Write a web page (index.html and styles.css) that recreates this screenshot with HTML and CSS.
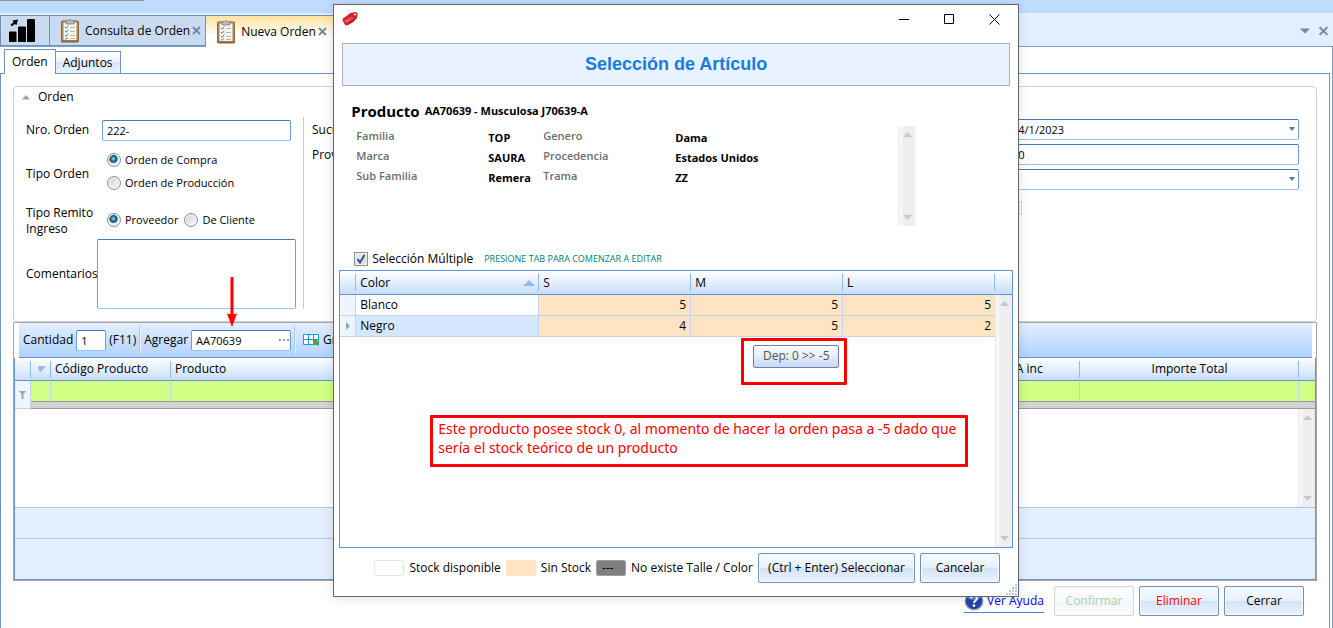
FILE: index.html
```html
<!DOCTYPE html>
<html lang="es">
<head>
<meta charset="utf-8">
<title>Nueva Orden</title>
<link rel="stylesheet" href="styles.css">
</head>
<body>
<svg class="defs" aria-hidden="true">
  <symbol id="clipboard" viewBox="0 0 20 25">
    <rect x="1" y="2.5" width="18" height="22" rx="1.5" fill="#8f6238"/>
    <rect x="1.8" y="3.3" width="16.4" height="19.4" rx="1" fill="#b08352"/>
    <rect x="3.5" y="4.5" width="13" height="17.5" fill="#f4f4f0"/>
    <path d="M6 2.5h2.5a1.6 1.6 0 0 1 3 0H14V6H6z" fill="#b9bcbc" stroke="#777" stroke-width=".7"/>
    <path d="M5 9l1.2 1.2L8.300 7.600M5 13l1.200 1.200 2.100-2.600M5 17l1.200 1.200 2.100-2.600M5 20.400l1.200.8 1.800-1.800" fill="none" stroke="#4c8a95" stroke-width="1"/>
    <path d="M10 9.500h5M10 13.500h5M10 17.500h5M10 20.500h5" stroke="#b5b5b5" stroke-width="1"/>
  </symbol>
  <symbol id="cross" viewBox="0 0 9 9"><path d="M1 1l7 7M8 1L1 8" stroke="#6f87a8" stroke-width="1.800" fill="none"/></symbol>
</svg>

<div class="app">
  <div class="ribbon-edge"><span></span></div>
  <div class="doc-tabs">
    <button class="doc-tab home" aria-label="Inicio">
      <svg width="26" height="25" viewBox="0 0 26 25"><path d="M0 14.500q0-1 1-1h5.500q1 0 1 1V24H0zM9 9.500q0-1 1-1h6q1 0 1 1V24H9zM18 2q0-1 1-1h6q1 0 1 1v22h-8z"/><path d="M1.500 6.500l3-2-1-2L9 1.500 7.500 7l-2-1-2.500 2.500z"/></svg>
    </button>
    <div class="doc-tab"><svg width="20" height="25"><use href="#clipboard"/></svg><span>Consulta de Orden</span><button class="tab-close" aria-label="Cerrar pestaña"><svg width="9" height="9"><use href="#cross"/></svg></button></div>
    <div class="doc-tab active"><svg width="20" height="25"><use href="#clipboard"/></svg><span>Nueva Orden</span><button class="tab-close" aria-label="Cerrar pestaña"><svg width="9" height="9"><use href="#cross"/></svg></button></div>
    <div class="tab-tools">
      <svg width="10" height="6" viewBox="0 0 10 6"><path d="M0 .5h10L5 5.500z" fill="#6f87a8"/></svg>
      <svg width="11" height="10" viewBox="0 0 9 9"><use href="#cross"/></svg>
    </div>
  </div>

  <main class="document">
    <nav class="page-tabs">
      <button class="page-tab selected">Orden</button><button class="page-tab">Adjuntos</button>
    </nav>
    <div class="page">
      <section class="group">
        <h2><svg width="8" height="5" viewBox="0 0 8 5"><path d="M0 4.500L4 0l4 4.500z" fill="#8fa8c8"/></svg>Orden</h2>
        <div class="form">
          <div class="form-left">
            <label for="nro">Nro. Orden</label>
            <input id="nro" class="box" value="222-">
            <span>Tipo Orden</span>
            <div class="radios stacked">
              <label><input type="radio" name="tipo" checked>Orden de Compra</label>
              <label><input type="radio" name="tipo">Orden de Producción</label>
            </div>
            <span class="two-lines">Tipo Remito Ingreso</span>
            <div class="radios">
              <label><input type="radio" name="remito" checked>Proveedor</label>
              <label><input type="radio" name="remito">De Cliente</label>
            </div>
            <label for="com">Comentarios</label>
            <textarea id="com" class="box"></textarea>
          </div>
          <div class="form-mid"><span>Sucu.</span><span>Prov.</span></div>
          <div class="form-right">
            <select class="box" aria-label="Fecha"><option>24/1/2023</option></select>
            <input class="box" aria-label="Número" value="00">
            <select class="box" aria-label="Estado"><option></option></select>
            <input type="checkbox" disabled aria-label="Opción">
          </div>
        </div>
      </section>

      <section class="items">
        <div class="toolbar">
          <label for="cant">Cantidad</label><input id="cant" class="box qty" value="1"><span>(F11)</span>
          <i class="sep"></i>
          <label for="agr">Agregar</label>
          <span class="lookup"><input id="agr" class="box" value="AA70639"><svg width="12" height="3" viewBox="0 0 12 3"><path d="M0 0h2v2H0zM4 0h2v2H4zM8 0h2v2H8z" fill="#7f9cc4"/></svg></span>
          <i class="sep"></i>
          <button class="tool"><svg width="16" height="12" viewBox="0 0 16 12"><path d="M.5.500h15v10H.5zM5.500.500v10M10.500.500v10M.5 5.500h15" fill="#fff" stroke="#159fd6"/><path d="M9 5l3 1 1-1 3 3v4l-3-2-3 1 1-2z" fill="#5d9f3c"/></svg>Grilla</button>
        </div>
        <div class="grid">
          <table class="items-table">
            <colgroup><col class="c16"><col class="c20"><col class="c120"><col><col class="c150"><col class="c219"><col class="c16"></colgroup>
            <thead><tr><th></th><th><svg width="8" height="6" viewBox="0 0 8 6"><path d="M0 0h8L3 6 1 5z" fill="#8dbcf5"/></svg></th><th>Código Producto</th><th>Producto</th><th class="center">Precio IVA inc</th><th class="center">Importe Total</th><th></th></tr></thead>
            <tbody>
              <tr class="filter"><td class="row-head" rowspan="2"><svg width="7" height="8" viewBox="0 0 7 8"><path d="M0 0h7L4.500 3v5h-2V3z" fill="#86a5d2"/></svg></td><td></td><td></td><td></td><td></td><td></td><td></td></tr>
              <tr class="splitter"><td colspan="6"></td></tr>
            </tbody>
          </table>
          <div class="items-body"><div class="scroll"><svg width="9" height="5" viewBox="0 0 9 5"><path d="M0 5l4.500-5L9 5z"/></svg><svg width="9" height="5" viewBox="0 0 9 5"><path d="M0 0l4.500 5L9 0z"/></svg></div></div>
          <div class="summary"></div>
          <div class="summary tall"></div>
        </div>
      </section>

      <footer class="actions">
        <a class="help" href="#"><svg width="20" height="20" viewBox="0 0 20 20"><circle cx="10" cy="10" r="9.500" fill="#a9a9b5"/><circle cx="10" cy="10" r="8.300" fill="#2445a8"/><path d="M3 7a8 8 0 0 1 14 0q-7 4-14 0z" fill="#6380cc"/><path d="M7 7.500q.3-2.700 3-2.700t3 2.500q0 1.500-1.500 2.400-1.500.9-1.500 2.300" fill="none" stroke="#fff" stroke-width="2"/><circle cx="10" cy="14.600" r="1.300" fill="#fff"/></svg>Ver Ayuda</a>
        <button class="btn" disabled>Confirmar</button>
        <button class="btn danger">Eliminar</button>
        <button class="btn">Cerrar</button>
      </footer>
    </div>
  </main>
</div>

<svg class="arrow" width="10" height="50" viewBox="0 0 10 50"><path d="M5 1v38" stroke="#f00" stroke-width="3" stroke-linecap="round"/><path d="M0 36.500l5 1 5-1L5 50z" fill="#f00"/></svg>

<div class="dialog" role="dialog" aria-labelledby="dlg-title">
  <div class="titlebar">
    <svg width="16" height="16" viewBox="0 0 16 16"><path d="M1 7.500Q0 9 1 10.500l2 3.200q1 1.400 3 .4l5-3 4-4.400.4-4.200Q15.200 1 13.500.9L8.500 2z" fill="#d8232a"/><path d="M4.500 14.600l6.300-3.500 4.200-4.400.4-4.200-1 4-4.200 3.400z" fill="#a81219"/><circle cx="13" cy="3.600" r="1" fill="#fff"/><path d="M3.500 9.700l1.200.3.300 1.200M5.800 8.500l1 1.500M7.800 7.300l.8 1.500M9.500 6.300l1 1.200" fill="none" stroke="#fff" stroke-width=".8"/></svg>
    <div class="win-buttons">
      <button aria-label="Minimizar"><svg width="10" height="11"><path d="M0 5.500h10" stroke="#000"/></svg></button>
      <button aria-label="Maximizar"><svg width="10" height="11"><path d="M.5.500h9v9h-9z" fill="none" stroke="#000"/></svg></button>
      <button aria-label="Cerrar"><svg width="11" height="11"><path d="M.5.500l10 10M10.500.500l-10 10" stroke="#000"/></svg></button>
    </div>
  </div>
  <h1 id="dlg-title">Selección de Artículo</h1>
  <div class="product"><b>Producto</b><strong>AA70639 - Musculosa J70639-A</strong></div>
  <div class="details">
    <dl>
      <dt>Familia</dt><dd>TOP</dd><dt>Genero</dt><dd>Dama</dd>
      <dt>Marca</dt><dd>SAURA</dd><dt>Procedencia</dt><dd>Estados Unidos</dd>
      <dt>Sub Familia</dt><dd>Remera</dd><dt>Trama</dt><dd>ZZ</dd>
    </dl>
    <div class="scroll"><svg width="9" height="5" viewBox="0 0 9 5"><path d="M0 5l4.500-5L9 5z"/></svg><svg width="9" height="5" viewBox="0 0 9 5"><path d="M0 0l4.500 5L9 0z"/></svg></div>
  </div>
  <div class="multi"><label><input type="checkbox" checked>Selección Múltiple</label><span>PRESIONE TAB PARA COMENZAR A EDITAR</span></div>
  <div class="size-grid">
    <table class="size-head">
      <colgroup><col class="c16"><col class="c183"><col><col><col><col class="c17"></colgroup>
      <thead><tr><th></th><th class="sorted">Color<svg width="12" height="6" viewBox="0 0 12 6"><path d="M0 6l6-6 6 6z" fill="#8dbcf5"/></svg></th><th>S</th><th>M</th><th>L</th><th></th></tr></thead>
    </table>
    <div class="size-body">
      <table>
        <colgroup><col class="c16"><col class="c183"><col><col><col></colgroup>
        <tbody>
          <tr><td class="row-head"></td><td>Blanco</td><td class="out">5</td><td class="out">5</td><td class="out">5</td></tr>
          <tr class="current"><td class="row-head"><svg width="4" height="8" viewBox="0 0 4 8"><path d="M0 0l4 4-4 4z" fill="#86a5d2"/></svg></td><td>Negro</td><td class="out">4</td><td class="out">5</td><td class="out">2</td></tr>
        </tbody>
      </table>
      <div class="scroll"><svg width="9" height="5" viewBox="0 0 9 5"><path d="M0 5l4.500-5L9 5z"/></svg><svg width="9" height="5" viewBox="0 0 9 5"><path d="M0 0l4.500 5L9 0z"/></svg></div>
    </div>
    <div class="mark"><div class="tip">Dep: 0 &gt;&gt; -5</div></div>
    <p class="note">Este producto posee stock 0, al momento de hacer la orden pasa a -5 dado que sería el stock teórico de un producto</p>
  </div>
  <div class="dialog-foot">
    <i class="swatch"></i><span>Stock disponible</span>
    <i class="swatch out"></i><span>Sin Stock</span>
    <i class="swatch none">---</i><span>No existe Talle / Color</span>
    <button class="btn wide">(Ctrl + Enter) Seleccionar</button>
    <button class="btn">Cancelar</button>
  </div>
  <svg class="grip" width="11" height="11" viewBox="0 0 11 11"><path d="M9 0h2v2H9zM6 3h2v2H6zM9 3h2v2H9zM3 6h2v2H3zM6 6h2v2H6zM9 6h2v2H9zM0 9h2v2H0zM3 9h2v2H3zM6 9h2v2H6zM9 9h2v2H9z" fill="#bfc6d4"/></svg>
</div>
</body>
</html>
```

FILE: styles.css
```css
* { box-sizing: border-box; }
html, body { height: 100%; }
body {
  margin: 0;
  position: relative;
  overflow: hidden;
  background: #fff;
  color: #000;
  font: 12px/16px "Open Sans", "Noto Sans", sans-serif;
}
button, input, select, textarea { font: inherit; color: inherit; margin: 0; }
button { border: 0; background: none; padding: 0; }
svg { display: block; flex: none; }
h1, h2, p, dl, dd { margin: 0; }
.defs { position: absolute; width: 0; height: 0; }

.app { min-height: 100%; display: flex; flex-direction: column; }
.ribbon-edge { height: 13px; background: #bfdbff; }
.ribbon-edge span { display: block; width: 144px; height: 1px; background: #8b939e; }
.doc-tabs { display: flex; align-items: flex-end; height: 34px; background: #e3efff; border-bottom: 1px solid #7f9dc6; }
.doc-tab {
  display: flex; align-items: center; gap: 5px; height: 31px; padding: 0 4px 0 10px;
  background: #cadbf0; border: 1px solid #6f91bf; border-left-width: 0;
}
.doc-tab.home { width: 50px; padding: 0 8px; border-left-width: 1px; }
.doc-tab.active { background: linear-gradient(#ffe2a0, #fff 65%); height: 32px; margin-bottom: -1px; border-bottom: 0; padding-right: 10px; }
.tab-close { margin-left: -3px; }
.tab-tools { margin-left: auto; display: flex; gap: 8px; padding: 0 4px 10px; align-items: center; }

.document { flex: 1; display: flex; flex-direction: column; border-right: 1px solid #7f9dc6; padding-right: 2px; }
.page-tabs { display: flex; align-items: flex-end; padding: 2px 0 0 4px; height: 26px; }
.page-tab { height: 22px; padding: 0 7px; border: 1px solid #6f91bf; border-left: 0; border-bottom: 0; background: linear-gradient(#fff, #edf4fe 45%, #d9e7fb 50%, #eaf2fe); }
.page-tab.selected { height: 25px; border-left: 1px solid #6f91bf; background: #fff; margin-bottom: -1px; position: relative; z-index: 1; }
.page { flex: 1; border: 1px solid #6f91bf; border-bottom: 0; padding: 12px 12px 0 12px; }

.group { border: 1px solid #d0d0d0; border-radius: 4px; padding: 2px 17px 12px 8px; }
.group h2 { display: flex; align-items: center; gap: 8px; font-size: 12px; font-weight: 400; }
.form { display: flex; padding: 12px 0 0 4px; }
.form-left { display: grid; grid-template-columns: 71px 199px; grid-template-rows: 26px 59px 34px 70px; row-gap: 1px; align-items: center; }
.form-left label, .form-left span { white-space: nowrap; }
.form-left .two-lines { white-space: normal; }
.box {
  width: 100%; height: 21px; padding: 0 4px; background: #fff; border: 1px solid #6d9cd8;
  border-top-color: #4b78b4; border-bottom-color: #9dc3f0; border-radius: 2px; font-size: 11px; outline: 0;
}
#nro { width: 189px; margin-left: 5px; }
textarea.box { height: 70px; resize: none; display: block; }
.radios { display: flex; gap: 6px; padding: 0 0 2px 10px; }
.radios.stacked { flex-direction: column; gap: 7px; padding-bottom: 5px; }
.radios label { display: flex; align-items: center; gap: 4px; font-size: 11px; }
input[type="radio"] {
  appearance: none; width: 14px; height: 14px; border-radius: 50%; border: 1px solid #8e8f8f;
  background: linear-gradient(135deg, #d0d3d8, #fafafa); box-shadow: inset 0 0 0 1px #f4f4f4;
}
input[type="radio"]:checked { background: radial-gradient(circle at 45% 40%, #a5e3fa 0, #2d87b5 20%, #17466a 36%, #e8eaec 48%); }
.form-mid { display: flex; flex-direction: column; gap: 9px; margin-left: 7px; padding: 5px 0 0 8px; border-left: 1px solid #c3cedb; }
.form-right { display: flex; flex-direction: column; gap: 4px; margin-left: auto; padding-top: 2px; width: 294px; }
.form-right .box { padding: 0 6px; }
select.box {
  appearance: none;
  background: #fff url("data:image/svg+xml,%3Csvg xmlns='http://www.w3.org/2000/svg' width='6' height='4'%3E%3Cpath d='M0 0h6L3 4z' fill='%234b78b4'/%3E%3C/svg%3E") no-repeat right 3px top 7px;
}
.form-right input[type="checkbox"] { appearance: none; width: 14px; height: 14px; margin: 7px 0 0 3px; border: 1px solid #d5d5d5; background: #f6f6f6; }

.items { border: 1px solid #a8a8a8; }
.toolbar {
  display: flex; align-items: center; gap: 3px; height: 35px; margin: 0 4px 0 5px; padding: 0 4px;
  background: linear-gradient(#e3efff, #b1d2ff); border-bottom: 1px solid #6593cf;
}
.toolbar > * { flex: none; }
.qty { width: 30px; }
.sep { width: 2px; height: 28px; background: #e8f1fd; border-left: 1px solid #a9c7ee; }
.lookup { position: relative; width: 100px; }
.lookup svg { position: absolute; right: 0; top: 9px; }
.tool { display: flex; align-items: center; gap: 4px; padding-left: 4px; }
.grid { border: 1px solid #6593cf; border-top: 0; }
table { width: 100%; border-collapse: separate; border-spacing: 0; table-layout: fixed; }
th, td { padding: 0; }
.c16 { width: 16px; } .c17 { width: 17px; } .c20 { width: 20px; } .c120 { width: 120px; }
.c150 { width: 150px; } .c183 { width: 183px; } .c219 { width: 219px; }
thead tr { background: linear-gradient(#fff, #c5dcfc); }
th {
  height: 23px; padding: 0 4px; text-align: left; font-weight: 400; white-space: nowrap; border-bottom: 1px solid #6593cf;
  background: linear-gradient(#8dbcf5, #8dbcf5) no-repeat right center / 1px 17px;
}
.size-head th { height: 24px; }
th:last-child { background: none; }
th svg { margin-left: 3px; }
th.center { text-align: center; }
.filter td { height: 21px; background: #d0ff82; border-right: 1px solid #c6d5e8; border-bottom: 1px solid #999; }
.splitter td { height: 7px; background: #d3d3d3; border-bottom: 1px solid #999; }
.filter td:last-child { border-right: 0; }
.items-table .row-head, .row-head { background: #eff5fe; border-right: 1px solid #c1d5f2; border-bottom: 1px solid #c1d5f2; }
.row-head svg { margin: 0 auto; }
.items-body { height: 98px; display: flex; justify-content: flex-end; }
.scroll {
  width: 17px; display: flex; flex-direction: column; align-items: center; justify-content: space-between; padding: 6px 0;
  background: linear-gradient(90deg, #fafafa, #eee 35%); border-left: 1px solid #e8e8e8;
}
.scroll path { fill: #c4c7cf; }
.summary { height: 31px; background: #e3efff; border-top: 1px solid #aac5ea; }
.summary.tall { height: 41px; }

.actions { display: flex; justify-content: flex-end; gap: 5px; padding: 5px 13px 0 0; }
.btn {
  width: 80px; height: 30px; border: 1px solid #7191bf; border-radius: 2px; white-space: nowrap;
  background: linear-gradient(#f6faff, #e8f1fd 48%, #d3e2f6 50%, #eaf3ff); box-shadow: inset 0 0 0 1px #f5f9ff;
}
.btn:disabled { color: #a9cfab; border-color: #ccd8e6; background: linear-gradient(#fff, #f8fafd 48%, #f1f5fa 50%, #fafcff); }
.btn.danger { color: #f00; }
.help { display: flex; align-items: center; gap: 3px; height: 27px; padding-top: 4px; margin-right: 5px; color: #00f; text-decoration: none; border-bottom: 1px solid #3d85d8; }

.arrow { position: absolute; left: 227px; top: 277px; }

.dialog {
  position: absolute; left: 25%; right: 314px; top: 4px; padding: 0 5px;
  background: #fff; border: 1px solid #666; box-shadow: 0 1px 10px rgba(0, 0, 0, .12);
}
.titlebar { display: flex; justify-content: space-between; align-items: center; height: 38px; padding: 0 4px 10px 3px; }
.win-buttons { display: flex; gap: 35px; padding-right: 9px; }
.dialog h1 {
  margin: 0 3px; height: 43px; border: 1px solid #b0b0b0; background: #e8f3ff; color: #1a7be0;
  font: bold 18px/41px "Liberation Sans", Arial, sans-serif; text-align: center;
}
.product { display: flex; align-items: center; gap: 5px; height: 24px; margin-top: 13px; padding-left: 12px; }
.product b { font-size: 15px; }
.product strong, .details { font-size: 11px; font-weight: 700; }
.details { display: flex; align-items: flex-start; padding: 5px 98px 0 17px; }
dl { flex: 1; display: grid; grid-template-columns: 132px 55px 132px 1fr; grid-auto-rows: 19px; row-gap: 1px; }
dt { color: #6d6d6d; font-weight: 600; }
dd { padding-top: 2px; }
.details .scroll { height: 100px; margin-top: -2px; }
.multi { display: flex; align-items: center; gap: 11px; height: 20px; margin-top: 23px; padding-left: 15px; }
.multi label { display: flex; align-items: center; gap: 4px; }
.multi span { font-size: 9px; color: #008080; }
.multi input {
  appearance: none; width: 14px; height: 14px; border: 1px solid #8e8f8f; box-shadow: inset 0 0 0 1px #f4f4f4;
  background: #dfe3ea url("data:image/svg+xml,%3Csvg xmlns='http://www.w3.org/2000/svg' width='10' height='10'%3E%3Cpath d='M1.500 5L4 8.500 8.500 1' fill='none' stroke='%233b4f8c' stroke-width='2'/%3E%3C/svg%3E") no-repeat center;
}
.size-grid { position: relative; border: 1px solid #6593cf; display: flex; flex-direction: column; min-height: 278px; margin-top: 1px; }
.sorted svg { float: right; margin: 5px 0; }
.size-body { flex: 1; display: flex; align-items: flex-start; }
.size-body table { flex: 1; }
.size-body .scroll { align-self: stretch; flex: none; }
.size-body td { height: 21px; padding: 0 4px; border-right: 1px solid #c1d5f2; border-bottom: 1px solid #c1d5f2; }
.size-body td.row-head { padding: 0; }
.current td:not(.row-head) { background: #d5e6ff; }
.size-body td.out { background: #ffe4c4; text-align: right; }
.size-body td:last-child { border-right: 0; }
.mark { position: absolute; left: 401px; top: 67px; width: 106px; height: 47px; border: 3px solid #f00; border-radius: 1px; padding: 4px 5px 0 9px; }
.tip { height: 23px; line-height: 20px; text-align: center; color: #555; white-space: nowrap; border: 1px solid #6482ad; border-radius: 2px; background: linear-gradient(#fff, #c9d9ef); }
.note { position: absolute; left: 90px; top: 144px; width: 538px; height: 52px; border: 3px solid #f00; border-radius: 1px; padding: 1px 5px; color: #f00; font: 14px/19px "Noto Sans", sans-serif; }
.dialog-foot { display: flex; align-items: center; justify-content: flex-end; gap: 5px; padding: 5px 13px 13px 0; white-space: nowrap; }
.swatch { width: 30px; height: 16px; border: 1px solid #e2e6f5; border-radius: 2px; font-style: normal; line-height: 14px; padding-left: 5px; }
.swatch.out { background: #ffe4c4; border-color: #ffe4c4; }
.swatch.none { background: #808080; border-color: #a0a0a0; }
.btn.wide { width: 157px; }
.grip { position: absolute; right: 1px; bottom: 1px; }
```
